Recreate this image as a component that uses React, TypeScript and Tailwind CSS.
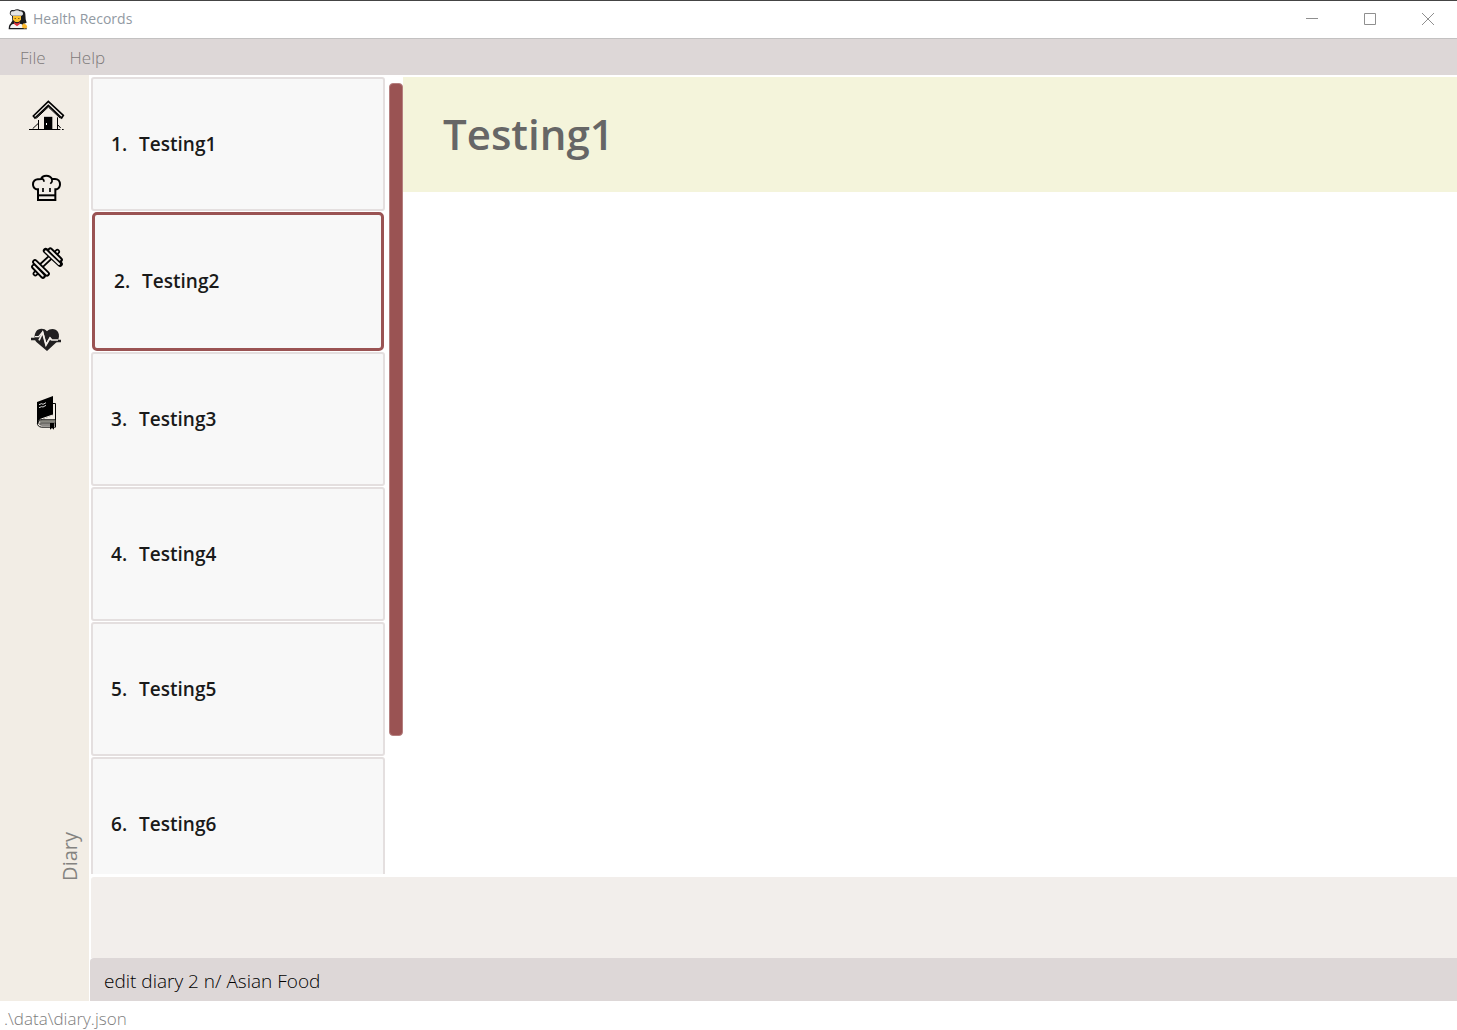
import React from "react";

const records = ["Testing1", "Testing2", "Testing3", "Testing4", "Testing5", "Testing6"];
const selected = 1;

function AppLogo() {
  return (
    <svg viewBox="24 24 60 66" className="h-[22px] w-5" aria-hidden="true">
      <path d="M36 48c-6-2-8-7-6-12 2-6 7-7 12-5 6-4 14-4 19 0 8-2 15 3 15 11l1 16 3 10-8 3H36l-3-3 4-6z" fill="#1b1b1e" />
      <path d="M38 47c-5-2-7-5-6-9 2-5 6-5 10-4 5-4 13-4 17 0 6-1 10 2 10 7 0 3-2 5-5 6z" fill="#e4e4e4" />
      <path d="M39 48h24v10c-2 6-7 9-12 9s-10-3-12-9z" fill="#fcc02e" />
      <path d="M28 86c0-12 4-16 14-17h18c10 1 15 5 18 17z" fill="#f4f4f4" stroke="#1b1b1e" strokeWidth="4" />
      <path d="M42 66l9 5 9-5-1 7-8 6-8-6z" fill="#e3303c" />
      <path d="M66 76l5-6 8 4 3 8-7 4-8-3z" fill="#fbb82d" />
      <path d="M44 54h3v3h-3zM55 54h3v3h-3z" fill="#4a3310" />
    </svg>
  );
}

function HomeIcon() {
  return (
    <svg viewBox="0 -15 180 180" className="size-[60px]" aria-hidden="true">
      <path d="M40 78l5 6 40-38 40 38 5-8-45-42z" fill="#f2ede7" stroke="#000" strokeWidth="5" />
      <path d="M49 85l36-34 36 34" fill="none" stroke="#000" strokeWidth="3" />
      <path d="M55.500 90v28M112.500 82v36M27 118.500h94M126 118.500h5M38 116l17-16M114 105l8 9" fill="none" stroke="#000" strokeWidth="3" />
      <path d="M72 81h25v37H72z" fill="#000" />
      <path d="M78 99h3v6h-3z" fill="#fff" />
      <path d="M72 79.500h25" stroke="#aaa" strokeWidth="2" />
    </svg>
  );
}

function ChefHatIcon() {
  return (
    <svg viewBox="0 0 180 180" className="size-[60px]" aria-hidden="true">
      <path
        d="M54 120V88h-5c-6-2-10-8-10-15 0-9 7-16 16-15l8-1c2-6 8-10 16-10s14 4 17 10h9c9 0 15 7 15 16 0 7-4 13-10 15h-4v32z"
        fill="#f2ede7"
        stroke="#000"
        strokeWidth="6"
      />
      <path d="M54 106h53" stroke="#000" strokeWidth="6" />
      <path d="M63 56c6 0 9 3 9 9M96 57v8l-5 6M69 84v12M90 84v12" fill="none" stroke="#000" strokeWidth="5" />
    </svg>
  );
}

function DumbbellIcon() {
  return (
    <svg viewBox="0 0 180 180" className="size-[60px]" aria-hidden="true">
      <g strokeLinecap="round">
        <path d="M64 92l28-26" stroke="#000" strokeWidth="17" />
        <path d="M64 92l28-26" stroke="#f2ede7" strokeWidth="6" />
        <path d="M46 116l2-2M112 50l-2 2" stroke="#000" strokeWidth="16" />
        <path d="M46 116l2-2M112 50l-2 2" stroke="#f2ede7" strokeWidth="6" />
        <path d="M42 95l27 28M77 47l43 40" stroke="#000" strokeWidth="17" />
        <path d="M45 81l36 35M91 46l29 28" stroke="#000" strokeWidth="17" />
        <path d="M42 95l26 27M45 81l36 35M77 49l40 38M91 46l28 28" stroke="#f2ede7" strokeWidth="6" />
      </g>
    </svg>
  );
}

function HeartIcon() {
  return (
    <svg viewBox="0 0 180 180" className="size-[60px]" aria-hidden="true">
      <path d="M81 123L50 97c-8-9-8-23-2-32 7-11 25-11 33-1 9-10 27-9 33 2 5 9 4 20-3 29z" fill="#222021" />
      <path d="M33 87h27M98 93h25" stroke="#222021" strokeWidth="7" />
      <path d="M45 80h11l12-14 10 37 12-19 6 6h18" fill="none" stroke="#f2ede7" strokeWidth="4" />
      <path d="M57 91l11-23 10 37 12-21 5 7" fill="none" stroke="#f2ede7" strokeWidth="5" />
    </svg>
  );
}

function BookIcon() {
  return (
    <svg viewBox="0 0 180 180" className="size-[60px]" aria-hidden="true">
      <path d="M99 55.500h7.500v71H64c-8-1-12-6-12-12" fill="none" stroke="#000" strokeWidth="3" />
      <path d="M51 51l48-18v57l-36 14c-6 2-9 7-9 12h-3z" fill="#000" />
      <path d="M57 108c2-5 6-6 12-8l29-10" fill="none" stroke="#f2ede7" strokeWidth="3" />
      <path d="M62 105h44v8H62c-3-3-3-6 0-8z" fill="#898880" />
      <path d="M106 104H66c-7 0-10 4-10 8 0 5 4 8 10 8h42M60 114.500h46" fill="none" stroke="#000" strokeWidth="2.500" />
      <path d="M90 114h12v20l-6-5-6 5z" fill="#000" />
      <path d="M57 59l8-3 4 2 9-5M57 68l8-3 4 1 9-5" fill="none" stroke="#fff" strokeWidth="2.500" />
    </svg>
  );
}

const sections = [
  { label: "Home", Icon: HomeIcon },
  { label: "Recipes", Icon: ChefHatIcon },
  { label: "Exercises", Icon: DumbbellIcon },
  { label: "Health", Icon: HeartIcon },
  { label: "Diary", Icon: BookIcon },
];

function TitleBar() {
  return (
    <header className="flex h-[39px] shrink-0 items-center border-t border-b border-t-[#444444] border-b-[#c3c1c1] bg-white pb-[2px] pl-2">
      <AppLogo />
      <span className="ml-[5px] text-[14px] leading-5 text-[#929aa3]">Health Records</span>
      <div className="ml-auto flex h-full text-[#8f8f8f]">
        <button aria-label="Minimize" className="flex w-[58px] items-center justify-center">
          <svg viewBox="0 0 12 12" className="size-3" shapeRendering="crispEdges"><path d="M0 5.5h12" stroke="currentColor" /></svg>
        </button>
        <button aria-label="Maximize" className="flex w-[58px] items-center justify-center">
          <svg viewBox="0 0 12 12" className="size-3"><path d="M.5.5h11v11H.5z" fill="none" stroke="currentColor" /></svg>
        </button>
        <button aria-label="Close" className="flex w-[58px] items-center justify-center">
          <svg viewBox="0 0 12 12" className="size-3"><path d="M0 0l12 12M12 0L0 12" stroke="currentColor" /></svg>
        </button>
      </div>
    </header>
  );
}

export default function App() {
  return (
    <div className="flex h-screen flex-col overflow-hidden bg-white font-['Open_Sans','Noto_Sans',sans-serif]">
      <TitleBar />
      <nav className="flex h-9 shrink-0 items-center gap-6 bg-[#ddd7d7] pt-[2px] pl-5 text-[17px] font-light text-[#7d7a7a]">
        <button>File</button>
        <button>Help</button>
      </nav>
      <div className="flex min-h-0 flex-1">
        <aside className="flex w-[89px] shrink-0 flex-col bg-[#f2ede5] pt-[10px]">
          <div className="flex flex-col gap-[15px] pl-5">
            {sections.map(({ label, Icon }) => (
              <button key={label} aria-label={label} className="size-[60px]">
                <Icon />
              </button>
            ))}
          </div>
          <div className="mt-auto mb-[120px] flex justify-end pr-[5px]">
            <span className="rotate-180 text-[20px] leading-7 font-medium text-[#848380] [writing-mode:vertical-rl]">Diary</span>
          </div>
        </aside>
        <main className="flex min-w-0 flex-1 flex-col pl-[2px]">
          <div className="flex min-h-0 flex-1 pt-[2px] pb-[3px]">
            <ol className="flex w-[294px] shrink-0 flex-col gap-px overflow-hidden">
              {records.map((name, i) => (
                <li
                  key={name}
                  className={
                    i === selected
                      ? "mx-px flex h-[139px] shrink-0 items-center gap-3 rounded-[5px] border-[3px] border-[#9a5353] bg-[#f8f8f8] pl-[19px] text-[19px] font-semibold text-[#1a1a1a]"
                      : "flex h-[134px] shrink-0 items-center gap-3 rounded-[3px] border-2 border-[#e4dfdf] bg-[#f8f8f8] pl-[18px] text-[19px] font-semibold text-[#1a1a1a]"
                  }
                >
                  <span>{i + 1}.</span>
                  <span>{name}</span>
                </li>
              ))}
            </ol>
            <div className="w-[18px] shrink-0 pt-[6px] pl-1">
              <div className="h-[82.5%] w-[14px] rounded-[4px] border border-[#b57f7f] bg-[#9a5353]" />
            </div>
            <section className="min-w-0 flex-1">
              <div className="flex h-[115px] items-center bg-[#f4f4db] pb-[2px] pl-10">
                <h1 className="text-[42px] leading-[56px] font-semibold text-[#666666]">Testing1</h1>
              </div>
            </section>
          </div>
          <div role="status" className="h-[81px] shrink-0 rounded-tl-[3px] bg-[#f2eeeb]" />
          <input
            aria-label="Command"
            defaultValue="edit diary 2 n/ Asian Food"
            className="-ml-px h-[43px] shrink-0 rounded-tl-[4px] bg-[#ddd7d7] pt-[2px] pl-[14px] text-[19px] font-light text-black outline-none"
          />
        </main>
      </div>
      <footer className="h-[29px] shrink-0 pt-[6px] pl-1 text-[17px] leading-6 font-light text-[#7d7d7d]">.\data\diary.json</footer>
    </div>
  );
}
